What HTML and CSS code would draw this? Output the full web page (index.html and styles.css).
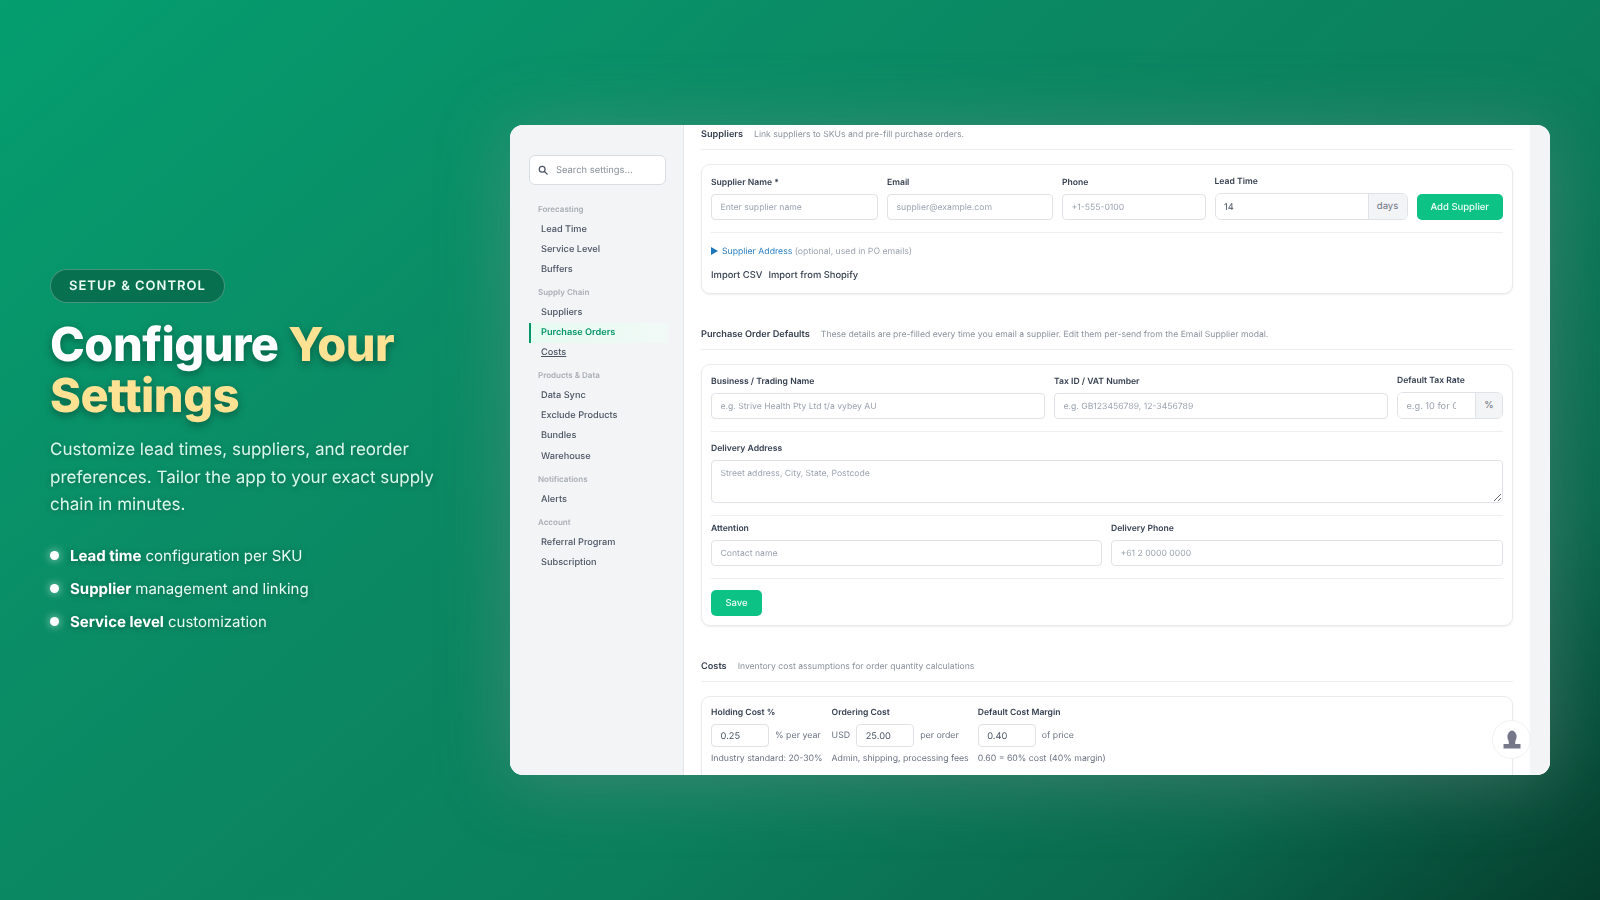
FILE: index.html
```html
<!DOCTYPE html>
<html lang="en">
<head>
    <meta charset="UTF-8">
    <title>Configure Your Settings</title>
    <link rel="stylesheet" href="styles.css">
</head>
<body>
    <div class="stage">
        <div class="pitch">
            <span class="badge">SETUP &amp; CONTROL</span>
            <h1>Configure <span class="gold">Your</span> <span class="gold">Settings</span></h1>
            <p class="lead">Customize lead times, suppliers, and reorder preferences. Tailor the app to your exact supply chain in minutes.</p>
            <ul class="points">
                <li><b>Lead time</b> configuration per SKU</li>
                <li><b>Supplier</b> management and linking</li>
                <li><b>Service level</b> customization</li>
            </ul>
        </div>

        <div class="window">
            <aside class="sidebar">
                <div class="search">
                    <svg width="10" height="10" viewBox="0 0 24 24" fill="none" stroke="#4b5563" stroke-width="3" stroke-linecap="round"><circle cx="10" cy="10" r="7"/><path d="M15.5 15.5L22 22"/></svg>
                    <span>Search settings...</span>
                </div>
                <div class="nav-label">Forecasting</div>
                <a class="nav-item">Lead Time</a>
                <a class="nav-item">Service Level</a>
                <a class="nav-item">Buffers</a>
                <div class="nav-label">Supply Chain</div>
                <a class="nav-item">Suppliers</a>
                <a class="nav-item active">Purchase Orders</a>
                <a class="nav-item hover">Costs</a>
                <div class="nav-label">Products &amp; Data</div>
                <a class="nav-item">Data Sync</a>
                <a class="nav-item">Exclude Products</a>
                <a class="nav-item">Bundles</a>
                <a class="nav-item">Warehouse</a>
                <div class="nav-label">Notifications</div>
                <a class="nav-item">Alerts</a>
                <div class="nav-label">Account</div>
                <a class="nav-item">Referral Program</a>
                <a class="nav-item">Subscription</a>
            </aside>

            <main class="content">
                <div class="section-head">
                    <strong>Suppliers</strong>
                    <span>Link suppliers to SKUs and pre-fill purchase orders.</span>
                </div>
                <div class="card card-supplier">
                    <div class="row row-supplier">
                        <div class="field">
                            <label>Supplier Name *</label>
                            <input type="text" placeholder="Enter supplier name">
                        </div>
                        <div class="field">
                            <label>Email</label>
                            <input type="text" placeholder="supplier@example.com">
                        </div>
                        <div class="field">
                            <label>Phone</label>
                            <input type="text" placeholder="+1-555-0100">
                        </div>
                        <div class="field">
                            <label>Lead Time</label>
                            <div class="input-group">
                                <input type="text" value="14">
                                <span>days</span>
                            </div>
                        </div>
                        <button class="btn">Add Supplier</button>
                    </div>
                    <hr>
                    <div class="address-toggle"><i></i><a>Supplier Address</a> <span>(optional, used in PO emails)</span></div>
                    <div class="imports"><a>Import CSV</a><a>Import from Shopify</a></div>
                </div>

                <div class="section-head second">
                    <strong>Purchase Order Defaults</strong>
                    <span>These details are pre-filled every time you email a supplier. Edit them per-send from the Email Supplier modal.</span>
                </div>
                <div class="card card-defaults">
                    <div class="row row-business">
                        <div class="field">
                            <label>Business / Trading Name</label>
                            <input type="text" placeholder="e.g. Strive Health Pty Ltd t/a vybey AU">
                        </div>
                        <div class="field">
                            <label>Tax ID / VAT Number</label>
                            <input type="text" placeholder="e.g. GB123456789, 12-3456789">
                        </div>
                        <div class="field">
                            <label>Default Tax Rate</label>
                            <div class="input-group tax">
                                <input type="text" placeholder="e.g. 10 for GST">
                                <span>%</span>
                            </div>
                        </div>
                    </div>
                    <hr>
                    <div class="field">
                        <label>Delivery Address</label>
                        <textarea placeholder="Street address, City, State, Postcode"></textarea>
                    </div>
                    <hr>
                    <div class="row row-contact">
                        <div class="field">
                            <label>Attention</label>
                            <input type="text" placeholder="Contact name">
                        </div>
                        <div class="field">
                            <label>Delivery Phone</label>
                            <input type="text" placeholder="+61 2 0000 0000">
                        </div>
                    </div>
                    <hr>
                    <button class="btn btn-save">Save</button>
                </div>

                <div class="section-head third">
                    <strong>Costs</strong>
                    <span>Inventory cost assumptions for order quantity calculations</span>
                </div>
                <div class="card card-costs">
                    <div class="cost">
                        <label>Holding Cost %</label>
                        <div class="cost-line"><input type="text" value="0.25"><span>% per year</span></div>
                        <small>Industry standard: 20-30%</small>
                    </div>
                    <div class="cost">
                        <label>Ordering Cost</label>
                        <div class="cost-line"><span>USD</span><input type="text" value="25.00"><span>per order</span></div>
                        <small>Admin, shipping, processing fees</small>
                    </div>
                    <div class="cost">
                        <label>Default Cost Margin</label>
                        <div class="cost-line"><input type="text" value="0.40"><span>of price</span></div>
                        <small>0.60 = 60% cost (40% margin)</small>
                    </div>
                </div>
            </main>

            <div class="scroll-strip"></div>

            <button class="avatar">
                <svg width="20" height="20" viewBox="0 0 20 20" fill="#77778a"><ellipse cx="10" cy="6.8" rx="4.6" ry="6.2"/><path d="M6.8 11h6.4v3H18.500v4.500h-17V14h5.300z"/></svg>
            </button>
        </div>
    </div>
</body>
</html>
```

FILE: styles.css
```css
* {
    box-sizing: border-box;
}
body {
    margin: 0;
    font-family: Inter, "Liberation Sans", sans-serif;
    text-rendering: geometricPrecision;
}
.stage {
    width: 1600px;
    height: 900px;
    overflow: hidden;
    display: flex;
    align-items: center;
    padding: 0 50px;
    gap: 50px;
    background: linear-gradient(140deg, #049e6f 0%, #0a8d66 30%, #0b7f5c 62%, #0a6a4e 82%, #053d2c 100%);
}

/* left column */
.pitch {
    width: 410px;
    flex-shrink: 0;
    padding-top: 7px;
    color: #fff;
    filter: blur(0.25px);
}
.badge {
    display: inline-block;
    height: 34px;
    line-height: 32px;
    padding: 0 18px;
    border-radius: 17px;
    border: 1px solid rgba(255, 255, 255, 0.25);
    background: #07704f;
    font-size: 13px;
    font-weight: 600;
    letter-spacing: 1px;
    color: #ecfdf5;
}
h1 {
    margin: 17px 0 0;
    font-size: 46.900px;
    line-height: 51px;
    font-weight: 800;
    letter-spacing: -0.5px;
    text-shadow: 0 3px 8px rgba(0, 0, 0, 0.35);
}
.gold {
    color: #fde294;
}
.lead {
    margin: 15px 0 0;
    font-size: 17px;
    line-height: 27.500px;
    color: #d9f7ea;
    text-shadow: 0 1px 6px rgba(0, 0, 0, 0.3);
}
.points {
    list-style: none;
    margin: 19px 0 0;
    padding: 0;
    font-size: 15px;
    color: #e6fbf2;
    text-shadow: 0 1px 6px rgba(0, 0, 0, 0.35);
}
.points li {
    height: 33px;
    line-height: 33px;
    display: flex;
    align-items: center;
    gap: 4px;
}
.points li::before {
    content: "";
    width: 9px;
    height: 9px;
    margin-right: 7px;
    border-radius: 50%;
    background: #fff;
    box-shadow: 0 0 8px rgba(255, 255, 255, 0.7);
}
.points b {
    font-weight: 700;
    color: #fff;
}

/* app window */
.window {
    position: relative;
    flex-shrink: 0;
    width: 1040px;
    height: 650px;
    display: flex;
    overflow: hidden;
    border-radius: 13px;
    background: #fff;
    box-shadow: 0 6px 70px rgba(150, 150, 150, 0.36);
    filter: blur(0.3px);
}
.sidebar {
    width: 174px;
    flex-shrink: 0;
    padding: 30px 17px 0 19px;
    background: #f3f4f6;
    border-right: 1px solid #e5e7eb;
}
.search {
    height: 30px;
    margin-bottom: 16.500px;
    padding: 0 8px;
    display: flex;
    align-items: center;
    gap: 8px;
    background: #fff;
    border: 1px solid #d9dce1;
    border-radius: 6px;
    font-size: 9.400px;
    color: #8b929c;
}
.nav-label {
    height: 15px;
    margin: 5.100px 0 3px;
    padding-left: 9px;
    line-height: 15px;
    font-size: 8px;
    font-weight: 600;
    color: #a9aeb6;
}
.nav-item {
    display: block;
    height: 20.100px;
    margin-right: -2px;
    padding-left: 12px;
    line-height: 20px;
    font-size: 9.200px;
    font-weight: 500;
    color: #4b5563;
}
.nav-item.active {
    padding-left: 10px;
    border-left: 2px solid #059669;
    background: linear-gradient(90deg, #e6fbf1, #f1f9f6);
    color: #059669;
    font-weight: 600;
}
.nav-item.hover {
    text-decoration: underline;
}

.content {
    flex: 1;
    min-width: 0;
    padding: 4px 17px 0;
}
.scroll-strip {
    width: 20px;
    flex-shrink: 0;
    background: #f3f4f6;
}
.section-head {
    height: 21px;
    display: flex;
    gap: 11px;
    border-bottom: 1px solid #eceef1;
    line-height: 12px;
    font-size: 8.650px;
    color: #8b929c;
}
.section-head strong {
    font-size: 9.200px;
    font-weight: 600;
    color: #374151;
}
.section-head.second {
    margin-top: 30px;
    height: 26px;
    padding-top: 5px;
}
.section-head.third {
    margin-top: 30px;
    height: 26px;
    padding-top: 5px;
}
.card {
    margin-top: 14px;
    padding: 11px 9px 9px;
    background: #fff;
    border: 1px solid #e9ebee;
    border-radius: 9px;
    box-shadow: 0 1px 2px rgba(0, 0, 0, 0.07);
}
.card-supplier {
    padding-bottom: 11px;
}
.card-defaults {
    padding-top: 10px;
}
.row {
    display: grid;
    gap: 9px;
    align-items: end;
}
.row-supplier {
    grid-template-columns: 167px 166px 143.500px 193px 1fr;
}
.row-business {
    grid-template-columns: 334px 334px 1fr;
}
.row-contact {
    grid-template-columns: 391px 1fr;
    margin-top: -4px;
}
.field {
    display: flex;
    flex-direction: column;
    gap: 5px;
}
label {
    display: block;
    line-height: 12px;
    font-size: 8.600px;
    font-weight: 600;
    color: #374151;
}
input,
textarea {
    width: 100%;
    height: 26px;
    padding: 1px 8.500px 0;
    border: 1px solid #dfe2e6;
    border-radius: 4px;
    background: #fff;
    font-family: inherit;
    font-size: 8.650px;
    color: #4b5563;
    outline: none;
    text-rendering: geometricPrecision;
}
input::placeholder,
textarea::placeholder {
    color: #9ca3af;
    opacity: 1;
}
textarea {
    display: block;
    height: 43px;
    padding: 8px 8.500px;
}
.input-group {
    height: 27px;
    display: flex;
    border: 1px solid #dfe2e6;
    border-radius: 6px;
    overflow: hidden;
}
.input-group input {
    flex: 1;
    min-width: 0;
    height: 100%;
    border: none;
    border-radius: 0;
    font-size: 9.300px;
}
.input-group span {
    width: 39px;
    flex-shrink: 0;
    border-left: 1px solid #dfe2e6;
    background: #f3f4f6;
    text-align: center;
    line-height: 25px;
    font-size: 9.500px;
    color: #6b7280;
}
.input-group.tax input {
    padding-right: 19px;
    font-size: 9.200px;
}
.input-group.tax span {
    width: 27px;
}
.btn {
    height: 26px;
    border: none;
    border-radius: 5px;
    background: #0cc285;
    color: #f1fdf8;
    font-family: inherit;
    font-size: 9.500px;
    font-weight: 500;
    text-rendering: geometricPrecision;
}
.btn-save {
    display: block;
    width: 51px;
    margin-top: 11px;
}
hr {
    height: 1px;
    margin: 12px 0 11px;
    border: none;
    background: #eceef1;
}
.address-toggle {
    margin-top: 13px;
    line-height: 12px;
    font-size: 8.700px;
    color: #9ca3af;
}
.address-toggle i {
    display: inline-block;
    margin-right: 4px;
    border-left: 7px solid #1d76b8;
    border-top: 4px solid transparent;
    border-bottom: 4px solid transparent;
    vertical-align: -1px;
}
.address-toggle a {
    color: #2b7fc0;
}
.imports {
    margin-top: 12px;
    display: flex;
    gap: 6px;
    line-height: 12px;
    font-size: 9.400px;
    font-weight: 500;
    color: #374151;
}
.card-costs {
    height: 90px;
    display: flex;
    gap: 9px;
    padding-top: 10px;
}
.cost-line {
    margin-top: 5px;
    height: 23px;
    display: flex;
    align-items: center;
    gap: 6px;
    font-size: 8.800px;
    color: #6b7280;
}
.cost-line input {
    width: 58px;
    height: 23px;
    font-size: 9.300px;
}
.cost small {
    display: block;
    margin-top: 6px;
    line-height: 12px;
    font-size: 8.720px;
    color: #6b7280;
}

.avatar {
    position: absolute;
    right: 19px;
    bottom: 16px;
    width: 39px;
    height: 39px;
    padding: 0;
    display: flex;
    align-items: center;
    justify-content: center;
    border: 1px solid #eef0f2;
    border-radius: 50%;
    background: #fff;
}
```
